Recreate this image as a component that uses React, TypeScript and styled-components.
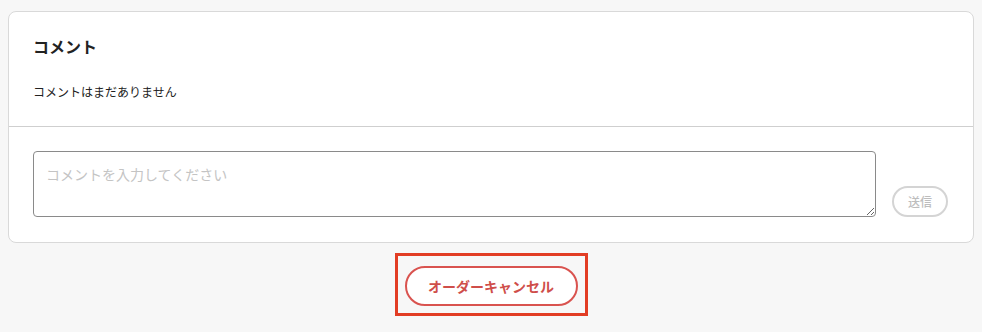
import React from 'react';
import styled, { createGlobalStyle } from 'styled-components';

const GlobalStyle = createGlobalStyle`
  html, body {
    margin: 0;
    background: #f7f7f7;
    font-family: "Noto Sans CJK JP", "Noto Sans", sans-serif;
    color: #222;
  }
`;

const Page = styled.div`
  padding: 11px 8px 0 8px;
  display: flex;
  flex-direction: column;
  align-items: center;
`;

const Card = styled.section`
  box-sizing: border-box;
  width: 100%;
  background: #fff;
  border: 1px solid #d9d9d9;
  border-radius: 8px;
`;

const CardHead = styled.div`
  padding: 23px 24px 25px;
  border-bottom: 1px solid #cfcfcf;
`;

const Title = styled.h2`
  margin: 0;
  font-size: 16px;
  font-weight: 700;
  line-height: 22px;
  color: #222;
`;

const EmptyText = styled.p`
  margin: 26px 0 0;
  font-size: 12px;
  line-height: 18px;
  color: #222;
`;

const Composer = styled.div`
  display: flex;
  align-items: flex-end;
  gap: 16px;
  padding: 24px 25px 25px 24px;
`;

const CommentInput = styled.textarea`
  flex: 1;
  box-sizing: border-box;
  height: 66px;
  padding: 12px 12px;
  border: 1px solid #8a8a8a;
  border-radius: 4px;
  font-family: inherit;
  font-size: 14px;
  line-height: 20px;
  color: #222;
  resize: vertical;
  outline: none;

  &::placeholder {
    color: #c4c4c4;
  }
`;

const SendButton = styled.button`
  box-sizing: border-box;
  width: 56px;
  height: 31px;
  border: 2px solid #d4d4d4;
  border-radius: 16px;
  background: #fff;
  color: #bdbdbd;
  font-family: inherit;
  font-size: 12px;
  font-weight: 500;
`;

const Highlight = styled.div`
  margin-top: 10px;
  padding: 10px 7px 7px;
  border: 3px solid #e23d24;
`;

const CancelButton = styled.button`
  box-sizing: border-box;
  width: 173px;
  height: 40px;
  border: 2px solid #d9534f;
  border-radius: 20px;
  background: #fff;
  color: #cf4e4a;
  font-family: inherit;
  font-size: 14px;
  font-weight: 700;
`;

export default function App() {
  return (
    <>
      <GlobalStyle />
      <Page>
        <Card>
          <CardHead>
            <Title>コメント</Title>
            <EmptyText>コメントはまだありません</EmptyText>
          </CardHead>
          <Composer>
            <CommentInput placeholder="コメントを入力してください" />
            <SendButton disabled>送信</SendButton>
          </Composer>
        </Card>
        <Highlight>
          <CancelButton>オーダーキャンセル</CancelButton>
        </Highlight>
      </Page>
    </>
  );
}
